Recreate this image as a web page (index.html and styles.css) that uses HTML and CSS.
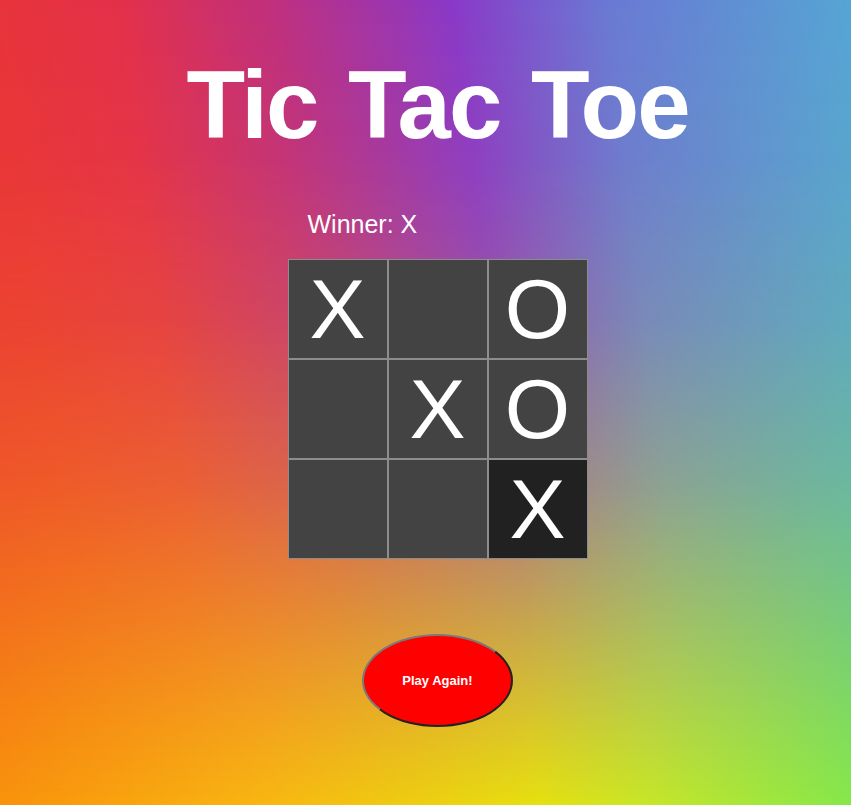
FILE: index.html
```html
<!DOCTYPE html>
<html lang="en">
<head>
<meta charset="utf-8">
<title>Tic Tac Toe</title>
<link rel="stylesheet" href="styles.css">
</head>
<body>
  <h1 class="title">Tic Tac Toe</h1>
  <div class="game">
    <div class="status">Winner: X</div>
    <div class="board">
      <div class="cell">X</div>
      <div class="cell"></div>
      <div class="cell">O</div>
      <div class="cell"></div>
      <div class="cell">X</div>
      <div class="cell">O</div>
      <div class="cell"></div>
      <div class="cell"></div>
      <div class="cell cell-win">X</div>
    </div>
    <button class="again" type="button">Play Again!</button>
  </div>
</body>
</html>
```

FILE: styles.css
```css
html {
  height: 100%;
  background: linear-gradient(to right, #f9930c 0%, #f8b812 32%, #e6e010 63%, #c8e628 76%, #86e84a 100%);
}

body {
  margin: 0;
  padding: 0 0 0 24px;
  min-height: 100%;
  position: relative;
  isolation: isolate;
  font-family: "Liberation Sans", Arial, sans-serif;
  color: #ffffff;
}

body::before {
  content: "";
  position: absolute;
  inset: 0;
  z-index: -1;
  background: linear-gradient(83deg, #e8333a 0%, #e8333a 10%, #e3304a 23%, #c02f7d 39%, #8a38c8 58%, #6a78d4 74%, #55a5d4 100%);
  -webkit-mask-image: linear-gradient(to bottom, #000 0%, rgba(0,0,0,0.96) 20%, rgba(0,0,0,0.84) 40%, rgba(0,0,0,0.62) 60%, rgba(0,0,0,0.38) 75%, rgba(0,0,0,0.14) 90%, rgba(0,0,0,0) 100%);
  mask-image: linear-gradient(to bottom, #000 0%, rgba(0,0,0,0.96) 20%, rgba(0,0,0,0.84) 40%, rgba(0,0,0,0.62) 60%, rgba(0,0,0,0.38) 75%, rgba(0,0,0,0.14) 90%, rgba(0,0,0,0) 100%);
}

.title {
  margin: 55px 0 0;
  font-size: 96px;
  line-height: 100px;
  font-weight: 700;
  letter-spacing: -2px;
  word-spacing: 6px;
  text-align: center;
}

.game {
  width: 300px;
  margin: 0 auto;
}

.status {
  margin-top: 57px;
  padding-left: 20px;
  font-size: 25px;
  line-height: 25px;
}

.board {
  margin-top: 22px;
  display: grid;
  grid-template-columns: repeat(3, 100px);
  grid-template-rows: repeat(3, 100px);
}

.cell {
  box-sizing: border-box;
  border: 1px solid #8d8d8d;
  background: #434343;
  display: flex;
  align-items: center;
  justify-content: center;
  font-size: 84px;
  line-height: 84px;
  color: #ffffff;
}

.cell-win {
  background: #212121;
}

.again {
  display: block;
  box-sizing: border-box;
  width: 151px;
  height: 93px;
  margin: 75px auto 0;
  padding: 0;
  border: 2px solid;
  border-color: #7a7a7a #222222 #222222 #7a7a7a;
  border-radius: 50%;
  background: #ff0000;
  color: #ffffff;
  font-family: "Liberation Sans", Arial, sans-serif;
  font-size: 13px;
  font-weight: 700;
}
```
